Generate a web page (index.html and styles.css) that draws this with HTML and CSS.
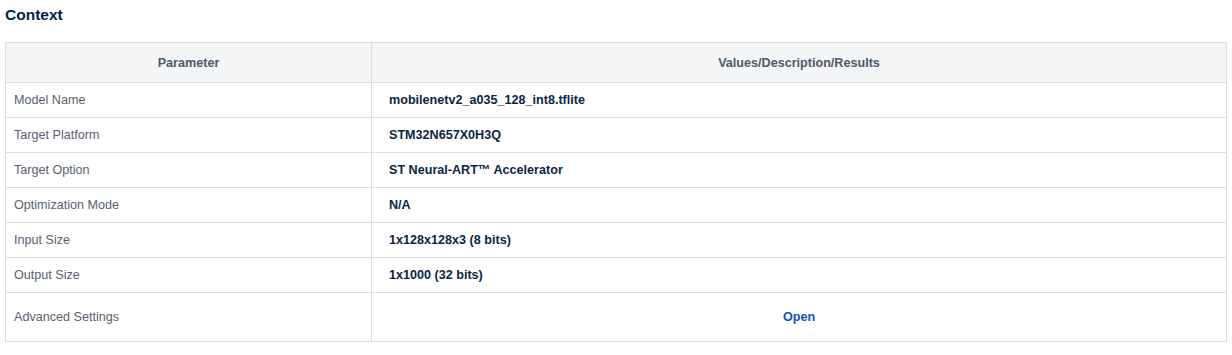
FILE: index.html
```html
<!DOCTYPE html>
<html>
<head>
<meta charset="utf-8">
<link rel="stylesheet" href="styles.css">
</head>
<body>
<section class="context">
  <h2 class="title">Context</h2>
  <table class="ctx-table">
    <thead>
      <tr><th class="col-param">Parameter</th><th class="col-val">Values/Description/Results</th></tr>
    </thead>
    <tbody>
      <tr><td class="param">Model Name</td><td class="val">mobilenetv2_a035_128_int8.tflite</td></tr>
      <tr><td class="param">Target Platform</td><td class="val">STM32N657X0H3Q</td></tr>
      <tr><td class="param">Target Option</td><td class="val">ST Neural-ART™ Accelerator</td></tr>
      <tr><td class="param">Optimization Mode</td><td class="val">N/A</td></tr>
      <tr><td class="param">Input Size</td><td class="val">1x128x128x3 (8 bits)</td></tr>
      <tr><td class="param">Output Size</td><td class="val">1x1000 (32 bits)</td></tr>
      <tr class="last"><td class="param">Advanced Settings</td><td class="val center"><a class="open" href="#">Open</a></td></tr>
    </tbody>
  </table>
</section>
</body>
</html>
```
FILE: styles.css
```css
* { box-sizing: border-box; }
html, body { margin: 0; padding: 0; background: #fff; }
body { font-family: "Liberation Sans", Arial, sans-serif; }
.context { padding: 6px 5px 0 5px; }
.title {
  margin: 0 0 18px 0;
  font-size: 15.5px;
  line-height: 18px;
  font-weight: 700;
  color: #03234b;
}
.ctx-table {
  width: 100%;
  border-collapse: collapse;
  border: 1px solid #dcdde1;
  font-size: 12.6px;
}
.ctx-table th, .ctx-table td { border: 1px solid #dcdde1; }
.ctx-table th {
  background: #f4f5f7;
  height: 40px;
  font-weight: 700;
  color: #4f5868;
  text-align: center;
}
.col-param { width: 366px; }
.ctx-table td { height: 35px; padding: 0 0 0 8px; }
.ctx-table td.param { color: #5a6170; }
.ctx-table td.val { padding-left: 17px; font-weight: 700; color: #0b2545; }
.ctx-table td.center { text-align: center; padding-left: 0; }
.ctx-table tr.last td { height: 49px; }
.open { color: #1250b8; text-decoration: none; font-weight: 700; }
```
